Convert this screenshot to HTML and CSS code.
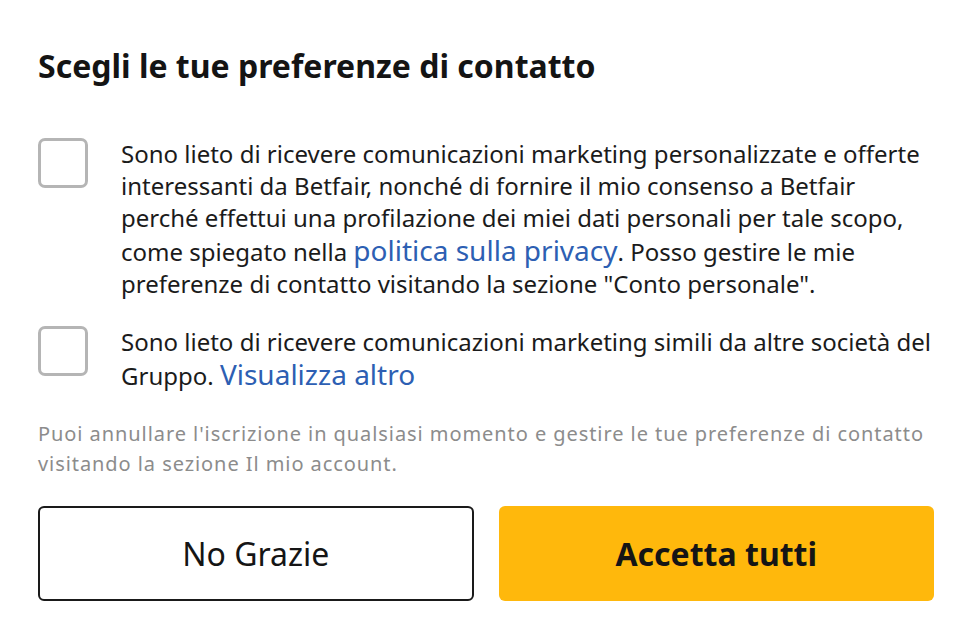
FILE: index.html
```html
<!DOCTYPE html>
<html lang="it">
<head>
<meta charset="utf-8">
<title>Preferenze di contatto</title>
<link rel="stylesheet" href="styles.css">
</head>
<body>
<main class="dialog">
  <h1 class="title">Scegli le tue preferenze di contatto</h1>
  <div class="options">
    <label class="option">
      <span class="box"></span>
      <span class="text">Sono lieto di ricevere comunicazioni marketing personalizzate e offerte interessanti da Betfair, nonché di fornire il mio consenso a Betfair perché effettui una profilazione dei miei dati personali per tale scopo, come spiegato nella <a class="link" href="#">politica sulla privacy</a>. Posso gestire le mie preferenze di contatto visitando la sezione "Conto personale".</span>
    </label>
    <label class="option">
      <span class="box"></span>
      <span class="text">Sono lieto di ricevere comunicazioni marketing simili da altre società del Gruppo. <a class="link" href="#">Visualizza altro</a></span>
    </label>
  </div>
  <p class="note">Puoi annullare l'iscrizione in qualsiasi momento e gestire le tue preferenze di contatto visitando la sezione Il mio account.</p>
  <div class="actions">
    <button class="btn btn-outline">No Grazie</button>
    <button class="btn btn-primary">Accetta tutti</button>
  </div>
</main>
</body>
</html>
```

FILE: styles.css
```css
html, body {
  margin: 0;
  padding: 0;
  background: #ffffff;
}
body {
  font-family: "Noto Sans", "Open Sans", sans-serif;
  color: #1b1b1b;
}
.dialog {
  padding: 46px 40px 0 38px;
}
.title {
  margin: 0;
  font-size: 32px;
  font-weight: 700;
  line-height: 40px;
  color: #141414;
}
.options {
  margin-top: 52px;
  display: flex;
  flex-direction: column;
  gap: 26px;
}
.option {
  display: flex;
  gap: 33px;
  align-items: flex-start;
}
.box {
  flex: none;
  width: 44px;
  height: 44px;
  border: 3px solid #b5b5b5;
  border-radius: 7px;
}
.text {
  font-size: 24px;
  line-height: 32px;
}
.link {
  color: #2d5fb3;
  text-decoration: none;
  font-size: 28px;
}
.note {
  margin: 27px 0 0;
  font-size: 20px;
  line-height: 30px;
  font-stretch: 87.5%;
  letter-spacing: 0.93px;
  color: #8c8c8c;
}
.actions {
  margin-top: 27px;
  display: grid;
  grid-template-columns: 1fr 1fr;
  gap: 25px;
}
.btn {
  height: 95px;
  border-radius: 6px;
  font-family: "Noto Sans", "Open Sans", sans-serif;
  font-size: 32px;
  color: #151515;
  padding: 0;
}
.btn-outline {
  background: #fff;
  border: 2px solid #1a1a1a;
}
.btn-primary {
  background: #ffb80c;
  border: none;
  font-weight: 700;
}
```
